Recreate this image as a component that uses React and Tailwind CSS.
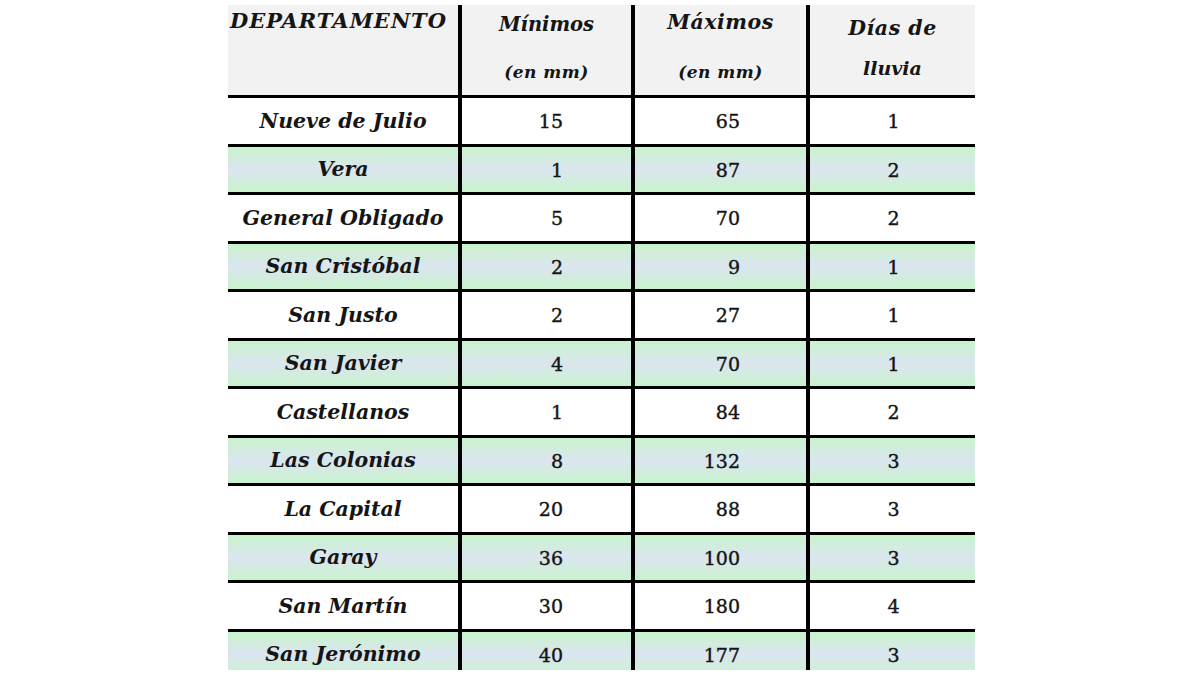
import React from "react";

const rows = [
  ["Nueve de Julio", "15", "65", "1"],
  ["Vera", "1", "87", "2"],
  ["General Obligado", "5", "70", "2"],
  ["San Cristóbal", "2", "9", "1"],
  ["San Justo", "2", "27", "1"],
  ["San Javier", "4", "70", "1"],
  ["Castellanos", "1", "84", "2"],
  ["Las Colonias", "8", "132", "3"],
  ["La Capital", "20", "88", "3"],
  ["Garay", "36", "100", "3"],
  ["San Martín", "30", "180", "4"],
  ["San Jerónimo", "40", "177", "3"],
];

const serif = "font-['DejaVu_Serif','Liberation_Serif',serif]";

export default function App() {
  return (
    <div className="w-[1200px] h-[675px] bg-white overflow-hidden">
      <div className={`ml-[228px] mt-[5px] w-[747px] h-[665px] overflow-hidden text-[#151515] ${serif}`}>
        {/* header */}
        <div className="grid grid-cols-[234px_173px_175px_165px] h-[90px] bg-[#f2f2f2]">
          <div className="border-r-4 border-black pl-[2px] pt-[2px] text-[21px] leading-[28px] font-bold italic tracking-[1px]">
            DEPARTAMENTO
          </div>
          <div className="border-r-4 border-black flex flex-col items-center pt-[6px] italic font-bold leading-[28px]">
            <span className="text-[19.5px]">Mínimos</span>
            <span className="text-[17px] mt-[19px] tracking-[0.5px]">(en mm)</span>
          </div>
          <div className="border-r-4 border-black flex flex-col items-center pt-[3px] italic font-bold leading-[28px]">
            <span className="text-[20.5px] tracking-[0.5px]">Máximos</span>
            <span className="text-[17px] mt-[22px] tracking-[0.5px]">(en mm)</span>
          </div>
          <div className="flex flex-col items-center pt-[9px] italic font-bold leading-[28px]">
            <span className="text-[20.5px] tracking-[0.5px]">Días de</span>
            <span className="text-[19px] mt-[12px]">lluvia</span>
          </div>
        </div>
        {/* body */}
        {rows.map((r, i) => (
          <div
            key={r[0]}
            className={`grid grid-cols-[234px_173px_175px_165px] h-[48.5px] border-t-[3px] border-black ${
              i % 2 === 1
                ? "bg-linear-to-b from-[#c8f3cc] via-[#dbe5ef] to-[#c8f3cc]"
                : "bg-white"
            }`}
          >
            <div className="border-r-4 border-black flex items-center justify-center pt-[1px] text-[20.5px] font-bold italic">
              {r[0]}
            </div>
            <div className="border-r-4 border-black flex items-center justify-end pr-[68px] pt-[1px] text-[19px] [-webkit-text-stroke:0.4px_#151515]">
              {r[1]}
            </div>
            <div className="border-r-4 border-black flex items-center justify-end pr-[66px] pt-[1px] text-[19px] [-webkit-text-stroke:0.4px_#151515]">
              {r[2]}
            </div>
            <div className="flex items-center justify-center pl-[2px] pt-[1px] text-[19px] [-webkit-text-stroke:0.4px_#151515]">
              {r[3]}
            </div>
          </div>
        ))}
      </div>
    </div>
  );
}
